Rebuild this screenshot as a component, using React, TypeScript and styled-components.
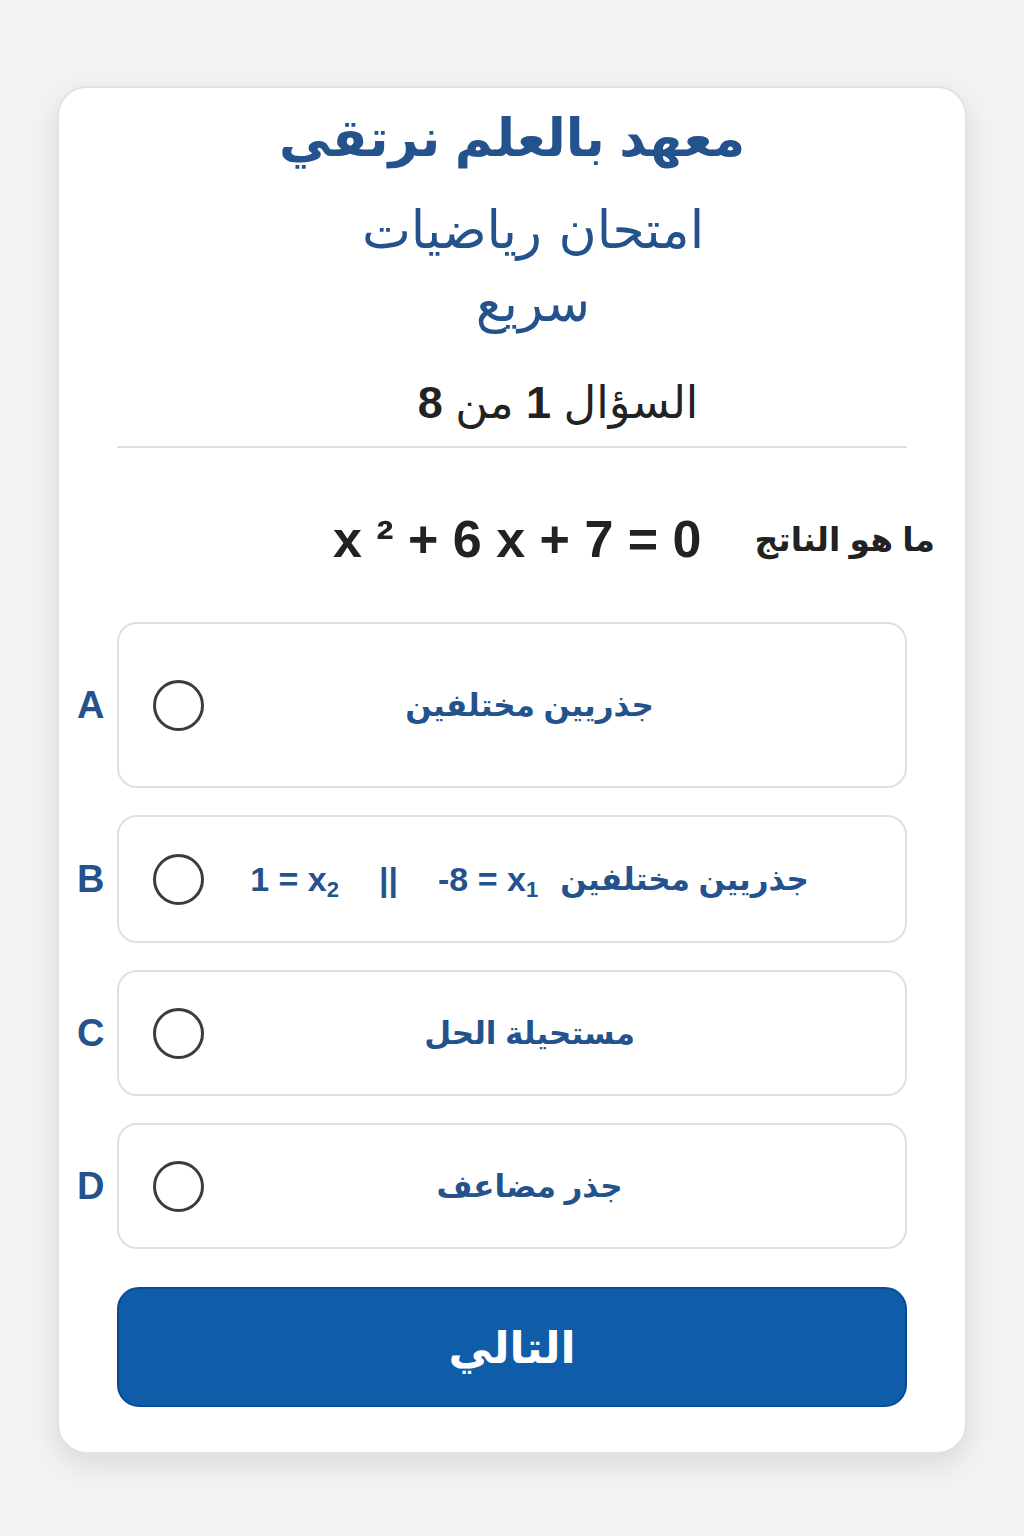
import React from "react";
import styled, { createGlobalStyle } from "styled-components";

const Global = createGlobalStyle`
  html, body { margin: 0; padding: 0; background: #f2f2f2; }
  body { font-family: "Liberation Sans", "DejaVu Sans", sans-serif; }
`;

const Page = styled.div`
  min-height: 1536px;
  display: flex;
  justify-content: center;
  align-items: flex-start;
  padding-top: 86px;
  box-sizing: border-box;
`;

const Card = styled.div`
  width: 910px;
  box-sizing: border-box;
  background: #fff;
  border: 2px solid #e2e2e2;
  border-radius: 30px;
  box-shadow: 0 10px 28px rgba(0, 0, 0, 0.1);
  padding: 17px 58px 45px;
  display: flex;
  flex-direction: column;
  align-items: stretch;
`;

const Title = styled.h1`
  margin: 0;
  text-align: center;
  font-size: 52px;
  line-height: 67px;
  font-weight: 700;
  color: #24528c;
`;

const Subtitle = styled.h2`
  margin: 22px auto 0;
  max-width: 380px;
  padding-left: 42px;
  text-align: center;
  font-family: "DejaVu Sans", sans-serif;
  font-size: 52px;
  line-height: 73px;
  font-weight: 400;
  color: #24528c;
`;

const Counter = styled.div`
  margin-top: 35px;
  padding-left: 92px;
  text-align: center;
  font-size: 45px;
  line-height: 56px;
  color: #222;
  b { font-weight: 700; }
`;

const Divider = styled.hr`
  margin: 15px 0 0;
  border: none;
  height: 2px;
  background: #e0e0e0;
`;

const QuestionRow = styled.div`
  margin: 63px -28px 0 0;
  display: flex;
  flex-direction: row;
  align-items: center;
  gap: 53px;
  height: 56px;
`;

const QuestionLabel = styled.span`
  font-size: 33px;
  font-weight: 700;
  color: #222;
`;

const Equation = styled.span`
  direction: ltr;
  unicode-bidi: isolate;
  font-size: 52px;
  font-weight: 700;
  color: #222;
  white-space: pre;
`;

const Options = styled.div`
  margin-top: 55px;
  display: flex;
  flex-direction: column;
  gap: 27px;
`;

const OptionRow = styled.div`
  direction: ltr;
  display: flex;
  align-items: center;
  margin-left: -42px;
`;

const Letter = styled.span`
  width: 42px;
  flex: none;
  padding-left: 2px;
  box-sizing: border-box;
  font-size: 38px;
  font-weight: 700;
  color: #24528c;
`;

const OptionBox = styled.div<{ $h: number }>`
  flex: 1;
  height: ${(p) => p.$h}px;
  box-sizing: border-box;
  border: 2px solid #e0e0e0;
  border-radius: 20px;
  display: flex;
  align-items: center;
  padding: 0 50px 0 34px;
`;

const Radio = styled.span`
  flex: none;
  width: 51px;
  height: 51px;
  box-sizing: border-box;
  border: 3px solid #3a3d40;
  border-radius: 50%;
`;

const OptionText = styled.div`
  flex: 1;
  display: flex;
  justify-content: center;
  align-items: center;
  gap: 22px;
  font-size: 31px;
  font-weight: 700;
  color: #24528c;
`;

const Arabic = styled.span`
  direction: rtl;
  unicode-bidi: isolate;
`;

const Math = styled.span`
  direction: ltr;
  unicode-bidi: isolate;
  white-space: pre;
  font-size: 34px;
  sub { font-size: 22px; vertical-align: -6px; line-height: 0; }
`;

const Sep = styled.span`
  margin: 0 18px;
  font-size: 34px;
`;

const NextButton = styled.button`
  margin-top: 38px;
  height: 120px;
  border: 2px solid #0a4a98;
  border-radius: 22px;
  background: #0f5ca8;
  color: #fff;
  font-family: "Liberation Sans", "DejaVu Sans", sans-serif;
  font-size: 44px;
  font-weight: 700;
  cursor: pointer;
`;

type Opt = { letter: string; h: number; content: React.ReactNode };

const opts: Opt[] = [
  { letter: "A", h: 166, content: <Arabic>جذريين مختلفين</Arabic> },
  {
    letter: "B",
    h: 128,
    content: (
      <>
        <Math>
          1 = x<sub>2</sub>
        </Math>
        <Sep>||</Sep>
        <Math>
          -8 = x<sub>1</sub>
        </Math>
        <Arabic>جذريين مختلفين</Arabic>
      </>
    ),
  },
  { letter: "C", h: 126, content: <Arabic>مستحيلة الحل</Arabic> },
  { letter: "D", h: 126, content: <Arabic>جذر مضاعف</Arabic> },
];

export default function App() {
  return (
    <>
      <Global />
      <Page>
        <Card dir="rtl">
          <Title>معهد بالعلم نرتقي</Title>
          <Subtitle>امتحان رياضيات سريع</Subtitle>
          <Counter>
            السؤال <b>1</b> من <b>8</b>
          </Counter>
          <Divider />
          <QuestionRow>
            <QuestionLabel>ما هو الناتج</QuestionLabel>
            <Equation>x ² + 6 x + 7 = 0</Equation>
          </QuestionRow>
          <Options>
            {opts.map((o) => (
              <OptionRow key={o.letter}>
                <Letter>{o.letter}</Letter>
                <OptionBox $h={o.h}>
                  <Radio />
                  <OptionText>{o.content}</OptionText>
                </OptionBox>
              </OptionRow>
            ))}
          </Options>
          <NextButton>التالي</NextButton>
        </Card>
      </Page>
    </>
  );
}
